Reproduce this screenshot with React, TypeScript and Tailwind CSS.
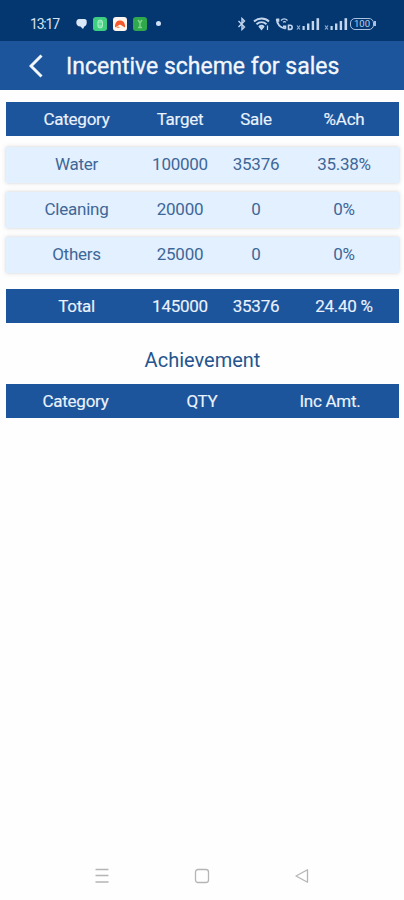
import React from 'react';
import clsx from 'clsx';

interface SalesRow {
  category: string;
  target: string;
  sale: string;
  ach: string;
}

const rows: SalesRow[] = [
  { category: 'Water', target: '100000', sale: '35376', ach: '35.38%' },
  { category: 'Cleaning', target: '20000', sale: '0', ach: '0%' },
  { category: 'Others', target: '25000', sale: '0', ach: '0%' },
];

const SignalBars: React.FC = () => (
  <svg width="26" height="14" viewBox="0 0 26 14" fill="#c3d6ee">
    <path d="M1 8.500l3 4M4 8.500l-3 4" stroke="#8fadd2" strokeWidth="1.200" />
    <rect x="6.5" y="9" width="2.2" height="4" />
    <rect x="11" y="6.5" width="2.4" height="6.5" />
    <rect x="15.7" y="4" width="2.4" height="9" />
    <rect x="20.5" y="1.2" width="2.6" height="11.8" />
  </svg>
);

const StatusBar: React.FC = () => (
  <div className="h-[41px] bg-[#04376f] flex items-center pt-[6px] pl-[30px] pr-[28px]">
    <span className="w-[46px] text-[14px] leading-4 tracking-[-1.2px] text-[#d5e3f5]">13:17</span>
    <div className="flex items-center gap-[6px]">
      {/* Chat bubble */}
      <svg width="11" height="12" viewBox="0 0 11 12">
        <path d="M3 1h5a2.500 2.500 0 0 1 2.700 2.600v1.200C10.700 7 9.500 8 8.500 8.300L7 11 4.500 8.600C1.500 8.500.3 6.500.3 4.500S1.500 1 3 1z" fill="#d9e7f6" />
      </svg>
      <svg width="14" height="14" viewBox="0 0 14 14">
        <rect width="14" height="14" rx="3" fill="#3fce80" />
        <rect x="5" y="3.200" width="4.400" height="7.600" rx="1.500" fill="#7be3a8" stroke="#b2f0cb" />
        <path d="M5.500 7h3.500" stroke="#3fce80" />
      </svg>
      <svg width="14" height="14" viewBox="0 0 14 14">
        <rect width="14" height="14" rx="3" fill="#fff5ef" />
        <path d="M2 10.500C1.800 6 4 2.800 7 3.500 10.500 3 12.500 7 12 10.500L9.500 9 7 7.500 4.500 9z" fill="#f4592b" />
        <path d="M3 11l2-2 2 2z" fill="#f79a5d" />
      </svg>
      <svg width="14" height="14" viewBox="0 0 14 14">
        <rect width="14" height="14" rx="3" fill="#30a94c" />
        <path d="M5 3l2 3 2-3M7 6v4M5 10.500h4" fill="none" stroke="#7fd48b" strokeWidth="1.500" />
      </svg>
      <span className="ml-[3px] size-[5px] rounded-full bg-[#cfe0f5]" />
    </div>
    <div className="ml-auto flex items-center">
      {/* Bluetooth */}
      <svg className="mr-[6px]" width="10" height="14" viewBox="0 0 10 14" fill="none" stroke="#c3d6ee" strokeWidth="1.400">
        <path d="M1.500 4l6 6L5 12.500v-11L7.500 4l-6 6" />
      </svg>
      {/* Wi-Fi */}
      <svg className="mr-[4px]" width="18" height="14" viewBox="0 0 18 14" fill="none" stroke="#c3d6ee" strokeWidth="1.900">
        <path d="M1 4.500C5 .5 12 .5 16 4.500M3.500 7.300c3-2.700 7-2.700 10 0M6 10c1.500-1.400 3.500-1.400 5 0" />
        <path d="M6.800 10.300h3.400L8.500 12.500zM14.500 8.500v4.500" fill="#c3d6ee" strokeWidth="1.200" />
      </svg>
      {/* Call over Wi-Fi */}
      <svg className="mr-[2px]" width="19" height="14" viewBox="0 0 19 14" fill="none" stroke="#c3d6ee">
        <path d="M1.800 2C2 7.500 5.500 11 10.500 11.500" strokeWidth="2" />
        <path d="M1.300 2.300h2.200v2.500M8 9.200h2.500v2.500" strokeWidth="1.600" />
        <path d="M6 3.500c2-2 4.500-2 6.500 0M8 5.300c1-.8 2-.8 2.800 0" strokeWidth="1.300" />
        <path d="M13.500 8.200h1.800c2.500 0 2.500 4.200 0 4.200h-1.800z" strokeWidth="1.600" />
      </svg>
      <SignalBars />
      <span className="w-[2px]" />
      <SignalBars />
      <div className="h-[12px] w-[24px] rounded-[5px] border-[1.5px] border-[#a9c2e2] flex items-center justify-center text-[9.5px] leading-none text-[#b8cdea]">
        100
      </div>
      <span className="h-[5px] w-[2px] bg-[#a9c2e2]" />
    </div>
  </div>
);

const Header: React.FC = () => (
  <div className="h-[49px] bg-[#1d559c] flex items-center pl-[29px]">
    <svg width="14" height="24" viewBox="0 0 14 24" fill="none" stroke="#f1f6fc" strokeWidth="3">
      <path d="M12.500 1.500L2 12l10.500 10.500" />
    </svg>
    <h1 className="ml-[23px] pt-[3px] text-[23px] leading-7 text-[#f3f7fd] whitespace-nowrap [-webkit-text-stroke:0.3px_#f3f7fd]">
      Incentive scheme for sales
    </h1>
  </div>
);

interface TableRowProps {
  cells: string[];
  filled?: boolean;
}

const TableRow: React.FC<TableRowProps> = ({ cells, filled }) => (
  <div
    className={clsx('grid items-center text-center text-[17px] tracking-[-0.25px] whitespace-nowrap', {
      'grid-cols-[141px_66px_86px_90px]': cells.length === 4,
      'grid-cols-[139px_114px_142px]': cells.length === 3,
      'h-[34px] pt-[2px] bg-[#1d559c] text-[#eaf2fc] [-webkit-text-stroke:0.15px_#eaf2fc]': filled,
      'h-[36px] bg-[#e3f0ff] text-[#3e6797] shadow-[0_0_4px_rgba(90,80,80,0.26)]': !filled,
    })}
  >
    {cells.map((cell, i) => (
      <span key={i}>{cell}</span>
    ))}
  </div>
);

export default function App() {
  return (
    <div className="w-[404px] h-[900px] flex flex-col bg-[#fefefe] font-[Roboto,sans-serif] overflow-hidden">
      <StatusBar />
      <Header />
      <main className="flex-1 pl-[6px] pr-[5px] pt-[12px]">
        <TableRow filled cells={['Category', 'Target', 'Sale', '%Ach']} />
        <div className="mt-[11px] mb-[16px] flex flex-col gap-[9px]">
          {rows.map((row) => (
            <TableRow key={row.category} cells={[row.category, row.target, row.sale, row.ach]} />
          ))}
        </div>
        <TableRow filled cells={['Total', '145000', '35376', '24.40 %']} />
        <h2 className="h-[61px] pt-[23px] text-center text-[20px] leading-7 text-[#24558f]">
          Achievement
        </h2>
        <TableRow filled cells={['Category', 'QTY', 'Inc Amt.']} />
      </main>
      {/* Android navigation keys */}
      <nav className="h-[49px] flex items-center justify-between pl-[94px] pr-[94px]">
        <svg width="16" height="16" viewBox="0 0 16 16" stroke="#b5b5b5" strokeWidth="1.300">
          <path d="M1.500 1.500h13M1.500 7.500h13M1.500 14h13" />
        </svg>
        <svg width="16" height="16" viewBox="0 0 16 16" fill="none" stroke="#b5b5b5" strokeWidth="1.300">
          <rect x="1.500" y="1.500" width="13" height="13" rx="2.500" />
        </svg>
        <svg width="16" height="16" viewBox="0 0 16 16" fill="none" stroke="#b5b5b5" strokeWidth="1.300">
          <path d="M13.500 1.800v12.400L2 8z" strokeLinejoin="round" />
        </svg>
      </nav>
    </div>
  );
}
